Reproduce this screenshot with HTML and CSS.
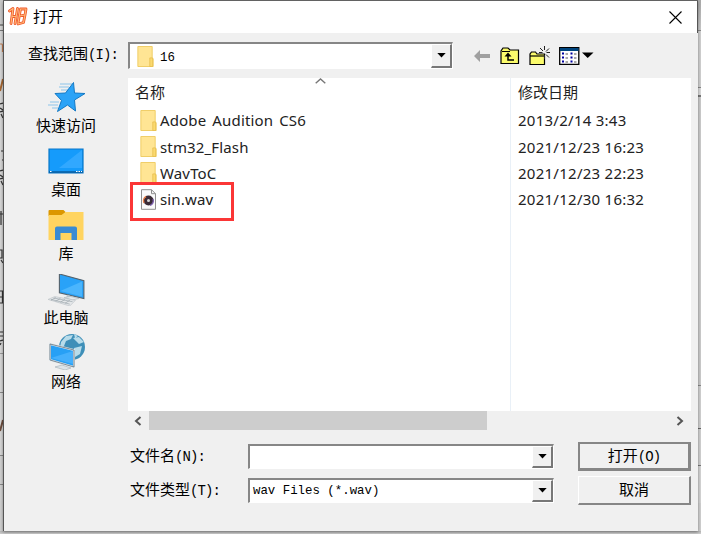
FILE: index.html
```
<!DOCTYPE html>
<html lang="zh-CN">
<head>
<meta charset="UTF-8">
<meta name="viewport" content="width=device-width, initial-scale=1.0">
<title>打开</title>
<link rel="stylesheet" href="styles.css">
</head>
<body>

<!-- shared icons -->
<svg class="defs" width="0" height="0">
  <symbol id="folder" viewBox="0 0 17 22">
    <path d="M.5.5h15v12l1 1v8H.5z" fill="#ffe594" stroke="#efcc62"/>
    <path d="M13 21.5v-9h3v9z" fill="#fbd96f" stroke="#e6bd4d" stroke-width=".8"/>
  </symbol>
  <symbol id="arrow" viewBox="0 0 10 6">
    <path d="M0 0h10L5 5.5z" fill="#000"/>
  </symbol>
</svg>

<!-- parent window behind the dialog -->
<div class="behind">
  <div class="behind-left">
    <svg width="3" height="501" viewBox="0 0 3 501" fill="none" stroke="#333" stroke-width="1.2">
      <path d="M0 44h1.500q1 0 1 2v6" stroke="#c07e55"/>
      <path d="M0 91L3 79" stroke="#a5652f" stroke-width="2"/>
      <path d="M0 104l3-1M0 108l3 2M0 112l3-1M1 114l2 4"/>
      <path d="M1 151h2M2 160h1"/>
      <path d="M0 171l3-1M0 175l3 2M0 179l3-1M1 181l2 4"/>
      <path d="M0 214h3M1 211v14"/>
      <path d="M0 250h2v8H0M1 260l2 3"/>
      <path d="M0 291h2.500v12H0M0 297h2"/>
      <path d="M0 332h3M0 336h3M0 341l3-1M1 343l-1 2"/>
      <path d="M0 431l3-11" stroke="#6b4b3b" stroke-width="2"/>
    </svg>
  </div>
  <div class="behind-right"></div>
</div>

<div class="dialog">
  <div class="titlebar">
    <svg class="logo" width="20" height="20" viewBox="0 0 20 20" fill="none" stroke-linecap="round" stroke-linejoin="round">
      <g stroke="#f0582a" stroke-width="2.8">
        <path d="M1.500 5L5 2.500 3 17.500M9.500 2.500L7 17.500M4 10.500h4"/>
        <path d="M12.500 3h5.500l-1 6-1.500 7.500-5.500 1.500M12.500 3L10 17M11.500 10l5-1"/>
      </g>
      <g stroke="#ffb878" stroke-width="1.200">
        <path d="M1.500 5L5 2.500 3 17.500M9.500 2.500L7 17.500M4 10.500h4"/>
        <path d="M12.500 3h5.500l-1 6-1.500 7.500-5.500 1.500M12.500 3L10 17M11.500 10l5-1"/>
      </g>
    </svg>
    <span class="title">打开</span>
    <svg class="close" width="13" height="13" viewBox="0 0 13 13"><path d="M.5.5l12 12M12.5.5l-12 12" stroke="#000" stroke-width="1.1"/></svg>
  </div>

  <div class="lookin">
    <label class="label">查找范围<span class="key">(I):</span></label>
    <div class="combo combo-dir">
      <svg width="17" height="21"><use href="#folder"/></svg>
      <span class="combo-text">16</span>
      <span class="drop"><svg width="9" height="5"><use href="#arrow"/></svg></span>
    </div>
    <div class="tools">
      <svg width="16" height="14" viewBox="0 0 16 14"><path d="M0 7l6-6v4h10v4H6v4z" fill="#a0a0a0"/></svg>
      <svg width="20" height="18" viewBox="0 0 20 18">
        <path d="M1 16.500V4l2-3h5l2 2h8.500v13.500z" fill="#fbfb6c" stroke="#000" stroke-width="1.200"/>
        <path d="M2 4.500h8" stroke="#000"/>
        <path d="M4.500 9.500L8 5.500l3.500 4z" fill="#000"/>
        <path d="M8 8v5h6" fill="none" stroke="#000" stroke-width="1.500"/>
      </svg>
      <svg width="21" height="20" viewBox="0 0 21 20">
        <path d="M1 18.500V8l1.500-2h4L8 8h7.500v10.500z" fill="#fbfb6c" stroke="#000" stroke-width="1.200"/>
        <path d="M1 10h14.500" stroke="#000" stroke-width="1.200"/>
        <path d="M15.500 0v4M15.500 9v4M10 6.500h3.500M17.500 6.500H21M11 2l3 3M20 2.500l-3 3M17 8.500l3 3" stroke="#222"/>
      </svg>
      <svg width="35" height="18" viewBox="0 0 35 18">
        <path d="M.7.7h19.100v16.600H.7z" fill="#fff" stroke="#000" stroke-width="1.300"/>
        <path d="M1 1h18.500v3H1z" fill="#00457e"/>
        <path d="M3 6.500h2M3 10.500h2M3 14.500h2M11.500 6.500h2M11.500 10.500h2M11.500 14.500h2" stroke="#0000a0" stroke-width="2"/>
        <path d="M6.500 7h2.500M6.500 11h2.500M6.500 15h2.500M15 7h2.500M15 11h2.500M15 15h2.500" stroke="#555"/>
        <path d="M23 5.500h11.500L28.700 11z" fill="#000"/>
      </svg>
    </div>
  </div>

  <div class="main">
    <div class="places">
      <div class="place">
        <svg width="38" height="32" viewBox="0 0 38 32">
          <path d="M13 2h12M12 5h10M14 8h8M3 20h9M1 23h10M5 26h6" stroke="#8cc4ea" stroke-width="1"/>
          <path d="M26.500 0.500l1 10.500 10.500.500-10.500 6.500 1 11-8-6-10 6.500 4-11-6.500-7 10.500-.500z" fill="#2ba3f7" stroke="#1479c4"/>
        </svg>
        <span>快速访问</span>
      </div>
      <div class="place">
        <svg width="38" height="32" viewBox="0 0 38 32">
          <path d="M2 3h34v24H2z" fill="#159bfb" stroke="#0877c9" stroke-width="1.200"/>
          <path d="M35 4v18H12z" fill="#31a8ff"/>
          <path d="M2 26h34" stroke="#0a5d9e" stroke-width="1.500"/>
          <path d="M3 25.500h2M29 25.500h6" stroke="#fff" stroke-dasharray="1.500 1"/>
        </svg>
        <span>桌面</span>
      </div>
      <div class="place">
        <svg width="38" height="32" viewBox="0 0 38 32">
          <path d="M1.500 5V1q0-1 1-1h14l2 2-2 4h-15z" fill="#dc9700"/>
          <path d="M1.500 5h13l4-3h18v28h-35z" fill="#ffd460"/>
          <path d="M8 30V18.500q0-2 2-2h18q2 0 2 2V30h-5.500v-7h-11v7z" fill="#398bd3"/>
        </svg>
        <span>库</span>
      </div>
      <div class="place">
        <svg width="38" height="34" viewBox="0 0 38 34">
          <path d="M12 0l26 7v19l-26-6z" fill="#29a2f8" stroke="#54636e" stroke-width="1.200"/>
          <path d="M36 8v16L13 18z" fill="#4ab5fd"/>
          <path d="M20 22l6 2v3h-7z" fill="#b8c4cc"/>
          <path d="M17 25l7-1 9 2-7 1.500z" fill="#e5eaed" stroke="#aab4ba" stroke-width=".6"/>
          <path d="M0 27l7-3 22 4-6 6z" fill="#e4e7e9" stroke="#b4bbc0" stroke-width=".6"/>
          <path d="M3 27l20 5M6 25.500l20 4M8 25l-5 3M13 26l-5 3M18 27l-5 3M23 28l-5 3" stroke="#99a3aa" stroke-width=".7"/>
        </svg>
        <span>此电脑</span>
      </div>
      <div class="place">
        <svg class="globe" width="38" height="36" viewBox="0 0 38 36">
          <circle cx="24" cy="13" r="13" fill="#3e8fb8"/>
          <path d="M13 8l5-6 7-1-2 4-5 2-2 5-4 2zM25 4l6-1 5 5-5 2-3-3zM26 14l8-2-2 8-5 3zM26 0l4 2-3 2z" fill="#b8dcea"/>
          <path d="M2 10l24 6v17L2 26z" fill="#27a0f5" stroke="#dfe7ec" stroke-width="2"/>
          <path d="M2 10l24 6v17L2 26z" fill="none" stroke="#52636e" stroke-width=".7"/>
          <path d="M25 17v13L3 24z" fill="#45b0fc"/>
          <path d="M7 33l7-2 9 3-6 2z" fill="#dde4e8" stroke="#a3afb6" stroke-width=".6"/>
        </svg>
        <span>网络</span>
      </div>
    </div>

    <div class="content">
      <div class="files">
        <svg class="sort" width="11" height="6" viewBox="0 0 11 6"><path d="M.7 5.300l4.800-4.300 4.800 4.300" fill="none" stroke="#777" stroke-width="1.400"/></svg>
        <div class="row head"><span class="name">名称</span><span class="date">修改日期</span></div>
        <div class="row">
          <span class="name"><svg width="17" height="21"><use href="#folder"/></svg>Adobe Audition CS6</span>
          <span class="date">2013/2/14 3:43</span>
        </div>
        <div class="row">
          <span class="name"><svg width="17" height="21"><use href="#folder"/></svg>stm32_Flash</span>
          <span class="date">2021/12/23 16:23</span>
        </div>
        <div class="row">
          <span class="name"><svg width="17" height="21"><use href="#folder"/></svg>WavToC</span>
          <span class="date">2021/12/23 22:23</span>
        </div>
        <div class="row">
          <span class="name">
            <svg width="17" height="21" viewBox="0 0 17 21">
              <path d="M1.500.700h10l4 4v15.600h-14z" fill="#fafafa" stroke="#8f8f8f"/>
              <path d="M11.500.700v4h4" fill="none" stroke="#8f8f8f"/>
              <circle cx="8.500" cy="11.500" r="5" fill="#3a2b36"/>
              <path d="M4 14a5 5 0 0 1 2-6.500" fill="none" stroke="#e8804a" stroke-width="1.500"/>
              <path d="M13 10a5 5 0 0 1-3 6.500" fill="none" stroke="#7d5fb0" stroke-width="1.300"/>
              <circle cx="8.500" cy="11.500" r="1.500" fill="#d8d8d8"/>
            </svg>sin.wav</span>
          <span class="date">2021/12/30 16:32</span>
          <i class="marker"></i>
        </div>
      </div>
      <div class="scrollbar">
        <svg width="8" height="10" viewBox="0 0 8 10"><path d="M6.500 1L2 5l4.500 4" fill="none" stroke="#555" stroke-width="2"/></svg>
        <div class="thumb"></div>
        <svg width="8" height="10" viewBox="0 0 8 10"><path d="M1.500 1L6 5 1.500 9" fill="none" stroke="#555" stroke-width="2"/></svg>
      </div>

      <div class="form">
        <label class="label">文件名<span class="key">(N):</span></label>
        <div class="combo">
          <span class="combo-text"></span>
          <span class="drop"><svg width="9" height="5"><use href="#arrow"/></svg></span>
        </div>
        <button class="btn default">打开<span class="key">(O)</span></button>
        <label class="label">文件类型<span class="key">(T):</span></label>
        <div class="combo">
          <span class="combo-text">wav Files (*.wav)</span>
          <span class="drop"><svg width="9" height="5"><use href="#arrow"/></svg></span>
        </div>
        <button class="btn">取消</button>
      </div>
    </div>
  </div>
</div>

</body>
</html>
```
FILE: styles.css
```
* {
  box-sizing: border-box;
}
body {
  margin: 0;
  width: 701px;
  height: 534px;
  overflow: hidden;
  position: relative;
  background: #c9c9c9;
  color: #000;
  font-family: "Liberation Mono", "Noto Sans CJK SC", monospace;
  font-size: 12.4px;
}
svg {
  display: block;
  flex: none;
}
.defs {
  position: absolute;
}

/* parent window */
.behind {
  position: absolute;
  inset: 0;
  display: flex;
  justify-content: space-between;
  background: linear-gradient(#696969 0 1px, #cfcfcf 1px 531px, #b5b5b5 531px, #cfcfcf 534px);
}
.behind-left {
  width: 3px;
  height: 501px;
  background: linear-gradient(#c8c8c8 24px, #888 24px 26px, #d4d4d4 26px 30px, #777 30px 31px, #d6d6d6 31px 353px, #999 353px 354px, #d6d6d6 354px 392px, #888 392px 393px, #d6d6d6 393px 455px, #888 455px 456px, #d0d0d0 456px 484px, #888 484px 485px, #d0d0d0 485px);
}
.behind-right {
  width: 3px;
  height: 503px;
  background: linear-gradient(#aaa, #c8c8c8 30px, #888 30px 31px, #d0d0d0 31px 87px, #888 87px 88px, #dadada 88px 95px, #777 95px 97px, #cacaca 97px 385px, #888 385px 386px, #d0d0d0 386px 428px, #666 428px 429px, #d0d0d0 429px 465px, #777 465px 466px, #d4d4d4 466px);
}

/* dialog */
.dialog {
  position: relative;
  width: 695px;
  height: 530px;
  margin: 1px 0 0 3px;
  border-left: 1px solid #555;
  background: #f0f0f0;
  box-shadow: 0 1px 3px rgba(0,0,0,0.4);
}
.titlebar {
  display: flex;
  align-items: center;
  height: 32px;
  padding: 0 15px 0 4px;
  background: #fff;
  border-right: 1px solid #555;
}
.logo {
  margin-top: -2px;
}
.title {
  margin: -4px 0 0 5px;
  font: 15px "Noto Sans CJK SC", sans-serif;
}
.close {
  margin-left: auto;
}
.label,
.btn {
  font: 15px/20px "Noto Sans CJK SC", sans-serif;
  white-space: nowrap;
}
.key {
  font: 14px/18px "Liberation Mono", monospace;
  letter-spacing: -0.9px;
}
.lookin {
  display: flex;
  align-items: center;
  height: 45px;
  padding-left: 24px;
}
.lookin .label {
  width: 100px;
  margin-top: -4px;
}

.combo {
  display: flex;
  align-items: center;
  height: 25px;
  border: 2px solid #868686;
  border-right: 1px solid #fff;
  border-bottom: 1px solid #fff;
  background: #fff;
}
.combo-dir {
  width: 325px;
  height: 27px;
  padding-left: 7px;
}
.combo-text {
  flex: 1;
  padding-left: 3px;
}
.combo-dir .combo-text {
  padding: 3px 0 0 6px;
}
.drop {
  display: flex;
  align-items: center;
  justify-content: center;
  align-self: stretch;
  width: 21px;
  background: #f0f0f0;
  border: 1px solid #fff;
  border-right: 2px solid #777;
  border-bottom: 2px solid #777;
}
.tools {
  display: flex;
  align-items: center;
  gap: 9px;
  margin: 1px 0 0 21px;
}
.tools svg:first-child {
  margin-right: 1px;
}

.main {
  display: flex;
}
.places {
  width: 124px;
  padding-top: 4px;
}
.place {
  display: flex;
  flex-direction: column;
  align-items: center;
  height: 64px;
}
.place span {
  height: 22px;
  font: 15px/22px "Noto Sans CJK SC", sans-serif;
}
.place svg {
  height: 32px;
}
.place .globe {
  width: 40px;
  height: 36px;
  margin: -4px 0 0 2px;
}
.content {
  width: 563px;
}

/* file list */
.files {
  position: relative;
  height: 333px;
  background: linear-gradient(90deg, #fff 382px, #e9f0f7 382px 383px, #fff 383px);
  font-family: "Noto Sans", "Noto Sans CJK SC", sans-serif;
  font-size: 15px;
}
.sort {
  position: absolute;
  left: 187px;
  top: 0;
}
.row {
  position: relative;
  display: flex;
  align-items: center;
  height: 26.4px;
  padding-left: 12px;
  color: #222;
}
.row.head {
  height: 29px;
  padding: 0 0 3px 7px;
  font-family: "Noto Sans CJK SC", sans-serif;
}
.name {
  display: flex;
  align-items: center;
  gap: 3px;
  width: 378px;
  letter-spacing: 0.15px;
  word-spacing: 2px;
}
.date {
  letter-spacing: 0.26px;
}
.head .name {
  width: 383px;
}
.head span {
  letter-spacing: 0;
}
.marker {
  position: absolute;
  left: 2px;
  top: -4px;
  width: 104px;
  height: 39px;
  border: 3px solid #fb3636;
}
.scrollbar {
  display: flex;
  align-items: center;
  height: 19px;
  padding: 0 7px 0 6px;
}
.thumb {
  width: 338px;
  height: 19px;
  margin: 0 auto 0 7px;
  background: #cdcdcd;
}

.form {
  display: grid;
  grid-template-columns: 120px 306px 137px;
  grid-auto-rows: 29px;
  row-gap: 5px;
  align-items: center;
  padding-top: 12px;
}
.form .label {
  padding: 0 0 3px 2px;
}
.btn {
  width: 113px;
  height: 29px;
  margin-left: 24px;
  padding: 0 0 2px;
  border: 1px solid #fff;
  border-right: 2px solid #868686;
  border-bottom: 2px solid #868686;
  background: #f0f0f0;
  color: #000;
}
.btn.default {
  border: 2px solid #868686;
  border-right-width: 3px;
  border-bottom-width: 3px;
}
```
